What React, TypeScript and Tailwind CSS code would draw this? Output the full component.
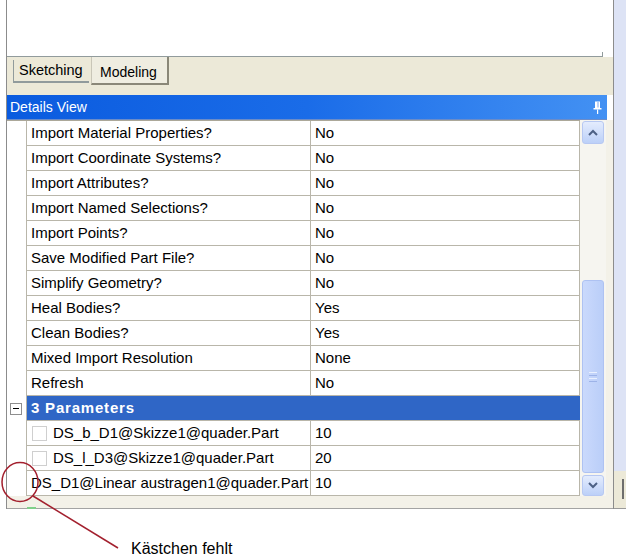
import React from "react";

type Row =
  | { kind: "prop"; name: string; value: string }
  | { kind: "group"; name: string }
  | { kind: "param"; name: string; value: string; check: boolean };

const rows: Row[] = [
  { kind: "prop", name: "Import Material Properties?", value: "No" },
  { kind: "prop", name: "Import Coordinate Systems?", value: "No" },
  { kind: "prop", name: "Import Attributes?", value: "No" },
  { kind: "prop", name: "Import Named Selections?", value: "No" },
  { kind: "prop", name: "Import Points?", value: "No" },
  { kind: "prop", name: "Save Modified Part File?", value: "No" },
  { kind: "prop", name: "Simplify Geometry?", value: "No" },
  { kind: "prop", name: "Heal Bodies?", value: "Yes" },
  { kind: "prop", name: "Clean Bodies?", value: "Yes" },
  { kind: "prop", name: "Mixed Import Resolution", value: "None" },
  { kind: "prop", name: "Refresh", value: "No" },
  { kind: "group", name: "3 Parameters" },
  { kind: "param", name: "DS_b_D1@Skizze1@quader.Part", value: "10", check: true },
  { kind: "param", name: "DS_l_D3@Skizze1@quader.Part", value: "20", check: true },
  { kind: "param", name: "DS_D1@Linear austragen1@quader.Part", value: "10", check: false },
];

function Chevron({ up }: { up: boolean }) {
  return (
    <svg width="10" height="7" viewBox="0 0 10 7">
      <path
        d={up ? "M1 6 L5 2 L9 6" : "M1 1 L5 5 L9 1"}
        fill="none"
        stroke="#4D6185"
        strokeWidth="2"
      />
    </svg>
  );
}

function Pin() {
  return (
    <svg width="9" height="13" viewBox="0 0 9 13">
      <rect x="2" y="0.5" width="5" height="6.5" fill="#fff" />
      <rect x="4.5" y="1" width="1" height="5.5" fill="#7aa6ee" />
      <rect x="0.5" y="7" width="8" height="1.5" fill="#fff" />
      <rect x="4" y="8.5" width="1.2" height="4.5" fill="#fff" />
    </svg>
  );
}

export default function App() {
  return (
    <div className="relative w-[626px] h-[559px] bg-white overflow-hidden font-['Liberation_Sans',Arial,sans-serif] text-black">
      <div className="flex h-[509px]">
        <div className="w-[6px] bg-white" />
        <div className="w-[608px] flex flex-col border-l border-r border-[#8C8C8C]">
          {/* top content area of tab control */}
          <div className="h-[57px] flex items-end bg-white">
            <div className="flex-1 h-full border-b border-[#919B9C]" />
            <div className="w-px h-[5px] bg-[#919B9C]" />
            <div className="w-[10px]" />
          </div>
          {/* tab strip */}
          <div className="h-[38px] bg-[#ECE9D8] flex items-start pl-[6px]">
            <div className="mt-[3px] h-[23px] w-[76px] border-l border-b-2 border-[#919B9C] flex items-center pl-[5px] text-[14.5px] leading-none">
              Sketching
            </div>
            <div className="ml-[2px] h-[28px] w-[78px] border-l border-r-2 border-b-2 border-l-[#C9C6B8] border-r-[#8A8778] border-b-[#8A8778] flex items-center pl-[8px] pt-[4px] text-[14px] leading-none bg-[#EFEDE1]">
              Modeling
            </div>
          </div>
          {/* details view header */}
          <div className="h-[25px] mr-[6px] bg-gradient-to-r from-[#0A5BDF] via-[#1A6CE8] to-[#4391F3] flex items-center justify-between pl-[3px] pr-[5px] border-b border-[#6C8CC8]">
            <span className="text-white text-[14px] leading-none">Details View</span>
            <Pin />
          </div>
          {/* table area */}
          <div className="h-[376px] flex bg-[#ECE9D8]">
            <div className="w-[573px] flex border-t border-[#ACA899]">
              {/* gutter */}
              <div className="w-[20px] bg-white border-r border-[#B9B6AA] flex flex-col">
                <div className="h-[275px]" />
                <div className="h-[25px] flex items-center justify-center pr-[2px]">
                  <div className="w-[12px] h-[12px] border border-[#8E8E8E] bg-white flex items-center justify-center">
                    <div className="w-[6px] h-px bg-black" />
                  </div>
                </div>
              </div>
              {/* rows */}
              <div className="flex-1 flex flex-col bg-white">
                {rows.map((r, i) =>
                  r.kind === "group" ? (
                    <div
                      key={i}
                      className="h-[25px] bg-[#2F66C6] border-b border-[#B9B6AA] flex items-center pl-[4px] text-white font-bold text-[15px] tracking-[0.8px]"
                    >
                      {r.name}
                    </div>
                  ) : (
                    <div key={i} className="h-[25px] flex border-b border-[#B9B6AA] text-[15px]">
                      <div className="w-[284px] border-r border-[#B9B6AA] flex items-center pl-[4px] whitespace-nowrap">
                        {r.kind === "param" && r.check && (
                          <div className="w-[15px] h-[15px] border border-[#CFCFCF] bg-white ml-[1px] mr-[6px] shrink-0" />
                        )}
                        {r.name}
                      </div>
                      <div className="w-[269px] border-r border-[#B9B6AA] flex items-center pl-[4px]">
                        {r.value}
                      </div>
                    </div>
                  )
                )}
              </div>
            </div>
            {/* scrollbar */}
            <div className="w-[26px] px-[2px] flex flex-col bg-[#F6F5F0]">
              <div className="h-[1px]" />
              <div className="h-[23px] rounded-[3px] border border-[#B7C8F2] bg-gradient-to-b from-[#E4ECFD] to-[#BCD0F8] flex items-center justify-center">
                <Chevron up={true} />
              </div>
              <div className="h-[136px]" />
              <div className="h-[193px] rounded-[3px] border border-[#AEC2F2] bg-gradient-to-r from-[#CAD9FC] to-[#BACEF8] flex flex-col items-center justify-center gap-[2px]">
                <div className="w-[8px] h-px bg-[#E9F0FE]" />
                <div className="w-[8px] h-px bg-[#9DB3E8]" />
                <div className="w-[8px] h-px bg-[#E9F0FE]" />
                <div className="w-[8px] h-px bg-[#9DB3E8]" />
              </div>
              <div className="h-[2px]" />
              <div className="h-[21px] rounded-[3px] border border-[#B7C8F2] bg-gradient-to-b from-[#E4ECFD] to-[#BCD0F8] flex items-center justify-center">
                <Chevron up={false} />
              </div>
            </div>
            <div className="flex-1 bg-[#F3F1E8]" />
          </div>
          {/* below table */}
          <div className="flex-1 bg-[#F3F1E8] border-b border-[#A3A3A3] relative">
            <div className="absolute left-[20px] bottom-[-1px] w-[9px] h-[2px] bg-[#7FD08A]" />
          </div>
        </div>
        {/* right strip */}
        <div className="flex-1 flex flex-col">
          <div className="flex-1 bg-[#DDE3F5]" />
          <div className="h-[38px] bg-[#ECE9D8] border-b border-[#9A9A9A] flex justify-end pr-[2px] pt-[8px]">
            <div className="w-[2px] h-[20px] bg-[#6E6E6E]" />
          </div>
        </div>
      </div>
      <div className="pl-[131px] pt-[31px] text-[16px] leading-[18px]">Kästchen fehlt</div>

      <svg className="absolute inset-0 pointer-events-none" width="626" height="559">
        <ellipse cx="20" cy="482" rx="18" ry="19.5" fill="none" stroke="#A3202E" strokeWidth="1.5" />
        <line x1="33" y1="496" x2="118" y2="548" stroke="#A3202E" strokeWidth="1.5" />
      </svg>
    </div>
  );
}
